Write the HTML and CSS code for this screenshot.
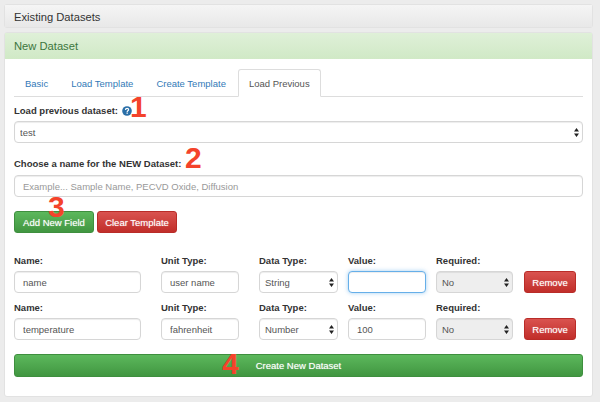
FILE: index.html
```html
<!DOCTYPE html>
<html lang="en">
<head>
    <meta charset="UTF-8">
    <title>New Dataset</title>
    <link rel="stylesheet" href="styles.css">
</head>
<body>
    <div class="panel panel-default">
        <div class="panel-heading">Existing Datasets</div>
    </div>
    <div class="panel panel-success">
        <div class="panel-heading">New Dataset</div>
        <div class="panel-body">
            <ul class="tabs">
                <li><a>Basic</a></li>
                <li><a>Load Template</a></li>
                <li><a>Create Template</a></li>
                <li class="active"><a>Load Previous</a></li>
            </ul>

            <label class="label label-first">Load previous dataset:
                <svg class="help" width="10" height="10" viewBox="0 0 10 10">
                    <circle cx="5" cy="5" r="4.8" fill="#2a6fa8"/>
                    <path d="M3.5 4c0-1 .7-1.6 1.6-1.6S6.6 3 6.6 3.8c0 1.1-1.4 1-1.4 2.1" fill="none" stroke="#fff" stroke-width="1.2"/>
                    <rect x="4.5" y="6.5" width="1.3" height="1.3" fill="#fff"/>
                </svg>
            </label>
            <div class="select-wrap">
                <select class="control"><option>test</option></select>
                <svg class="arrows" width="5" height="9" viewBox="0 0 5 9"><path d="M2.5 0L5 3.5H0zM2.5 9L0 5.5H5z"/></svg>
            </div>

            <label class="label label-name">Choose a name for the NEW Dataset:</label>
            <input class="control" type="text" placeholder="Example... Sample Name, PECVD Oxide, Diffusion">

            <div class="actions">
                <button class="btn btn-green">Add New Field</button>
                <button class="btn btn-red">Clear Template</button>
            </div>

            <div class="field-row first-row">
                <div><label class="label">Name:</label><input class="control" type="text" value="name"></div>
                <div><label class="label">Unit Type:</label><input class="control" type="text" value="user name"></div>
                <div>
                    <label class="label">Data Type:</label>
                    <div class="select-wrap">
                        <select class="control"><option>String</option></select>
                        <svg class="arrows" width="5" height="9" viewBox="0 0 5 9"><path d="M2.5 0L5 3.5H0zM2.5 9L0 5.5H5z"/></svg>
                    </div>
                </div>
                <div><label class="label">Value:</label><input class="control focus" type="text"></div>
                <div>
                    <label class="label">Required:</label>
                    <div class="select-wrap">
                        <select class="control disabled"><option>No</option></select>
                        <svg class="arrows" width="5" height="9" viewBox="0 0 5 9"><path d="M2.5 0L5 3.5H0zM2.5 9L0 5.5H5z"/></svg>
                    </div>
                </div>
                <button class="btn btn-red">Remove</button>
            </div>

            <div class="field-row">
                <div><label class="label">Name:</label><input class="control" type="text" value="temperature"></div>
                <div><label class="label">Unit Type:</label><input class="control" type="text" value="fahrenheit"></div>
                <div>
                    <label class="label">Data Type:</label>
                    <div class="select-wrap">
                        <select class="control"><option>Number</option></select>
                        <svg class="arrows" width="5" height="9" viewBox="0 0 5 9"><path d="M2.5 0L5 3.5H0zM2.5 9L0 5.5H5z"/></svg>
                    </div>
                </div>
                <div><label class="label">Value:</label><input class="control" type="text" value="100"></div>
                <div>
                    <label class="label">Required:</label>
                    <div class="select-wrap">
                        <select class="control disabled"><option>No</option></select>
                        <svg class="arrows" width="5" height="9" viewBox="0 0 5 9"><path d="M2.5 0L5 3.5H0zM2.5 9L0 5.5H5z"/></svg>
                    </div>
                </div>
                <button class="btn btn-red">Remove</button>
            </div>

            <button class="btn btn-green btn-block">Create New Dataset</button>
        </div>
    </div>

    <!-- annotations drawn over the screenshot -->
    <span class="mark mark-1">1</span>
    <span class="mark mark-2">2</span>
    <span class="mark mark-3">3</span>
    <span class="mark mark-4">4</span>
</body>
</html>
```

FILE: styles.css
```css
* {
    box-sizing: border-box;
}
html, body {
    height: 402px;
    overflow: hidden;
}
body {
    position: relative;
    margin: 0;
    padding: 4px 7px 0 4px;
    background-color: #ececec;
    font-family: "Liberation Sans", Arial, sans-serif;
    font-size: 9.5px;
    color: #333;
}
.panel {
    background-color: #fff;
    border: 1px solid #e2e2e2;
    border-radius: 3px;
    margin-bottom: 4px;
}
.panel-heading {
    font-size: 11.2px;
    padding: 0 9px;
}
.panel-default .panel-heading {
    height: 22px;
    line-height: 24px;
    color: #333;
    background: linear-gradient(#f5f5f5, #e8e8e8);
}
.panel-success {
    height: 365px;
}
.panel-success .panel-heading {
    height: 26px;
    line-height: 26px;
    color: #3c763d;
    background: linear-gradient(#dff0d8, #d0e9c6);
}
.panel-body {
    padding: 10px 9px 0 9px;
}
.tabs {
    display: flex;
    list-style: none;
    margin: 0;
    padding: 0;
    height: 28px;
    border-bottom: 1px solid #ddd;
}
.tabs li {
    height: 28px;
}
.tabs a {
    display: block;
    height: 28px;
    line-height: 27px;
    padding: 0 10px;
    color: #337ab7;
    border: 1px solid transparent;
    border-radius: 3px 3px 0 0;
}
.tabs li + li a {
    margin-left: 1px;
}
.tabs .active a {
    color: #555;
    background-color: #fff;
    border-color: #ddd #ddd #fff;
}
.label {
    display: block;
    height: 16px;
    line-height: 12px;
    font-weight: bold;
    font-size: 9.5px;
    color: #333;
}
.label-first {
    margin-top: 8px;
}
.label-name {
    margin-top: 16px;
    line-height: 10px;
}
.help {
    vertical-align: -2px;
    margin-left: 1px;
}
.control {
    display: block;
    width: 100%;
    height: 22px;
    padding: 0 8px;
    font-family: inherit;
    font-size: 9.5px;
    color: #555;
    background-color: #fff;
    border: 1px solid #d6d6d6;
    border-radius: 4px;
    box-shadow: inset 0 1px 1px rgba(0, 0, 0, .075);
    outline: none;
    appearance: none;
}
.control::placeholder {
    color: #999;
    opacity: 1;
}
.control.focus {
    border-color: #66afe9;
    box-shadow: inset 0 1px 1px rgba(0, 0, 0, .075), 0 0 4px rgba(102, 175, 233, .6);
}
.control.disabled {
    background-color: #eee;
    padding-left: 5px;
}
select.control {
    padding-left: 5px;
}
.select-wrap {
    position: relative;
}
.arrows {
    position: absolute;
    right: 4px;
    top: 7px;
    fill: #222;
}
.actions {
    display: flex;
    gap: 3px;
    margin-top: 14px;
}
.btn {
    height: 22px;
    padding: 0;
    font-family: inherit;
    font-size: 9.5px;
    color: #fff;
    text-shadow: 0 0 1px rgba(255, 255, 255, .6);
    border-radius: 3px;
    border: 1px solid;
}
.btn-green {
    background: linear-gradient(#5cb85c, #419641);
    border-color: #3e8f3e;
}
.btn-red {
    background: linear-gradient(#d9534f, #c12e2a);
    border-color: #b92c28;
}
.actions .btn {
    width: 80px;
}
.field-row {
    display: grid;
    grid-template-columns: 147px 98px 89px 88px 88px 52px;
    align-items: end;
    margin-top: 9px;
}
.first-row {
    margin-top: 22px;
}
.field-row > div:nth-child(1) .control {
    width: 127px;
}
.field-row > div:nth-child(2) .control {
    width: 78px;
}
.field-row > div:nth-child(3) .select-wrap {
    width: 79px;
}
.field-row > div:nth-child(4) .control {
    width: 78px;
}
.field-row > div:nth-child(5) .select-wrap {
    width: 77px;
}
.btn-block {
    display: block;
    width: 100%;
    height: 23px;
    margin-top: 14px;
}
.mark {
    position: absolute;
    font-family: "Liberation Sans", Arial, sans-serif;
    font-weight: bold;
    font-size: 30px;
    line-height: 30px;
    color: #f4432b;
}
.mark-1 { left: 130px; top: 92px; }
.mark-2 { left: 185px; top: 143px; }
.mark-3 { left: 48px; top: 192px; }
.mark-4 { left: 222px; top: 349px; }
```
